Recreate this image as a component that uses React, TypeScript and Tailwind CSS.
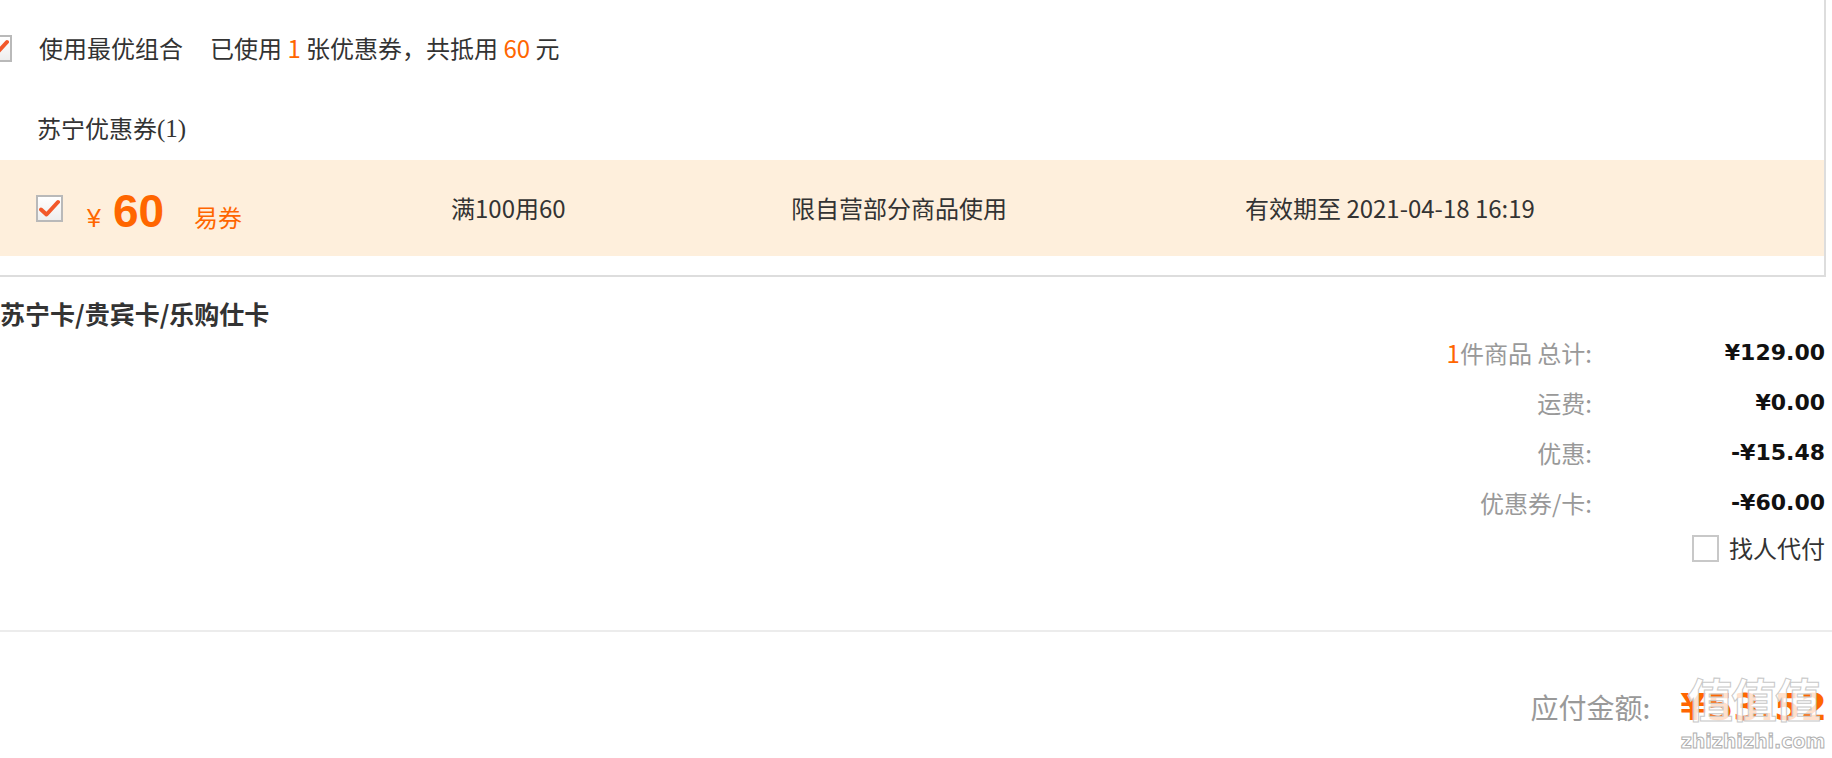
import React from "react";

function CheckBox({ checked }: { checked: boolean }) {
  return (
    <div className="w-[27px] h-[27px] shrink-0 border-2 border-[#b9b9b9] bg-gradient-to-b from-white to-[#eeeeee] flex items-center justify-center">
      {checked && (
        <svg width="21" height="19" viewBox="0 0 21 19">
          <path
            d="M2 10.5 L7.5 15.5 L19 3"
            fill="none"
            stroke="#f2582a"
            strokeWidth="4"
            strokeLinecap="round"
            strokeLinejoin="round"
          />
        </svg>
      )}
    </div>
  );
}

const O = "text-[#ff6600]";

export default function App() {
  return (
    <div className="relative w-[1832px] h-[758px] overflow-hidden bg-white text-[#333] font-['Noto_Sans_CJK_SC','Noto_Sans',sans-serif]">
      {/* coupon box */}
      <div className="w-[1826px] h-[277px] border-r-2 border-b-2 border-[#dddddd] flex flex-col">
        <div className="h-[96px] flex items-center -ml-[15px] text-[24px] leading-none">
          <CheckBox checked />
          <span className="ml-[27px]">使用最优组合</span>
          <span className="ml-[27px]">
            已使用 <span className={O}>1</span> 张优惠券，共抵用 <span className={O}>60</span> 元
          </span>
        </div>
        <div className="h-[64px] flex items-center pl-[37px] text-[24px] leading-none">
          苏宁优惠券<span className="text-[25px] font-['Liberation_Serif',serif]">(1)</span>
        </div>
        <div className="h-[96px] bg-[#feefdc] flex items-center text-[24px] leading-none">
          <div className="w-[451px] pl-[36px] flex items-center">
            <CheckBox checked />
            <div className={`flex items-baseline ${O} mt-[6px]`}>
              <span className="ml-[24px] text-[25px] font-['Liberation_Sans',sans-serif]">¥</span>
              <span className="ml-[12px] text-[46px] font-bold font-['Liberation_Sans',sans-serif]">60</span>
              <span className="ml-[30px] text-[24px]">易券</span>
            </div>
          </div>
          <div className="w-[340px]">满100用60</div>
          <div className="w-[454px]">限自营部分商品使用</div>
          <div>有效期至 2021-04-18 16:19</div>
        </div>
      </div>

      {/* cards */}
      <div className="pt-[24px] text-[25px] leading-none font-bold">苏宁卡/贵宾卡/乐购仕卡</div>

      {/* summary */}
      <div className="mt-[2px] pr-[7px] flex flex-col items-end text-[24px] leading-none">
        {[
          { label: (<><span className={O}>1</span>件商品 总计:</>), value: "¥129.00" },
          { label: "运费:", value: "¥0.00" },
          { label: "优惠:", value: "-¥15.48" },
          { label: "优惠券/卡:", value: "-¥60.00" },
        ].map((r, i) => (
          <div key={i} className="h-[50px] flex items-center">
            <div className="text-[#999]">{r.label}</div>
            <div className="w-[233px] text-right text-[22px] font-bold text-[#111] font-['DejaVu_Sans',sans-serif]">{r.value}</div>
          </div>
        ))}
        <div className="h-[40px] flex items-center">
          <div className="w-[27px] h-[27px] border-2 border-[#c8c8c8] bg-white" />
          <span className="ml-[10px]">找人代付</span>
        </div>
      </div>

      {/* total */}
      <div className="mt-[62px] border-t-2 border-[#ececec] h-[120px] flex items-center justify-end pr-[5px] pt-[32px]">
        <span className="text-[28px] leading-none text-[#999]">应付金额:</span>
        <span className={`ml-[30px] text-[38px] leading-none font-bold ${O} font-['DejaVu_Sans',sans-serif]`}>¥53.52</span>
      </div>

      {/* watermark */}
      <div className="absolute left-[1682px] top-[674px] w-[142px] flex flex-col items-center pointer-events-none">
        <div className="text-[46px] leading-none font-bold text-white/80 [-webkit-text-stroke:1px_#c8c8c8] tracking-[-2px]">值值值</div>
        <div className="mt-[12px] text-[19px] leading-none font-bold text-white [-webkit-text-stroke:1px_#b0b0b0] font-['DejaVu_Sans',sans-serif]">zhizhizhi.com</div>
      </div>
    </div>
  );
}
